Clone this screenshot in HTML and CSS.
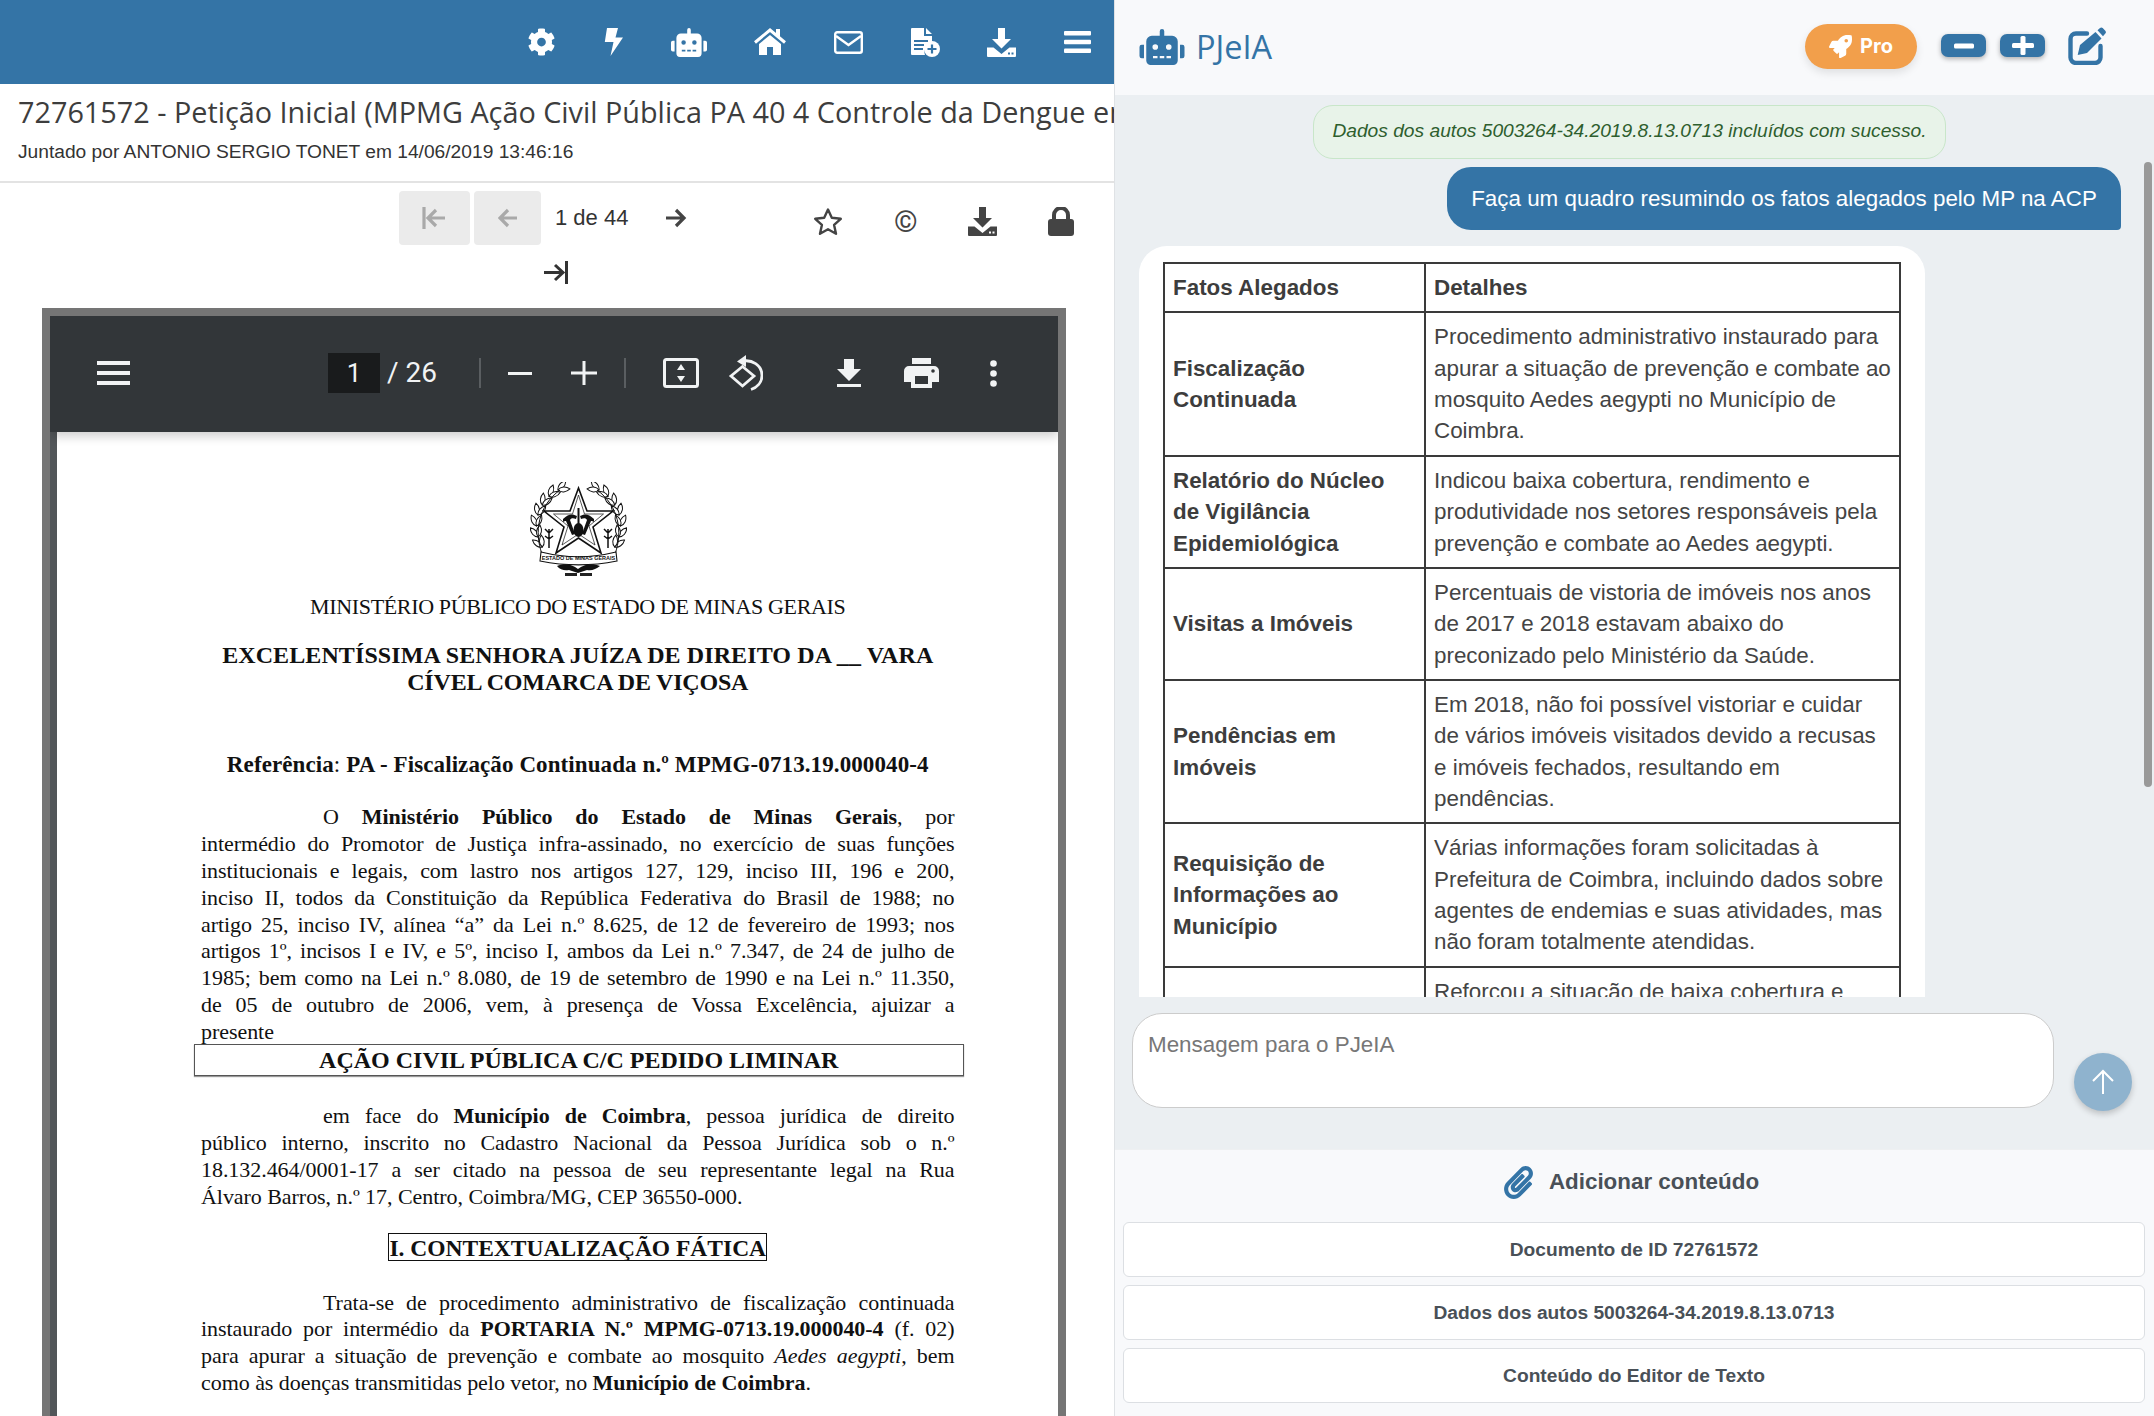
FILE: index.html
```html
<!DOCTYPE html>
<html lang="pt-BR">
<head>
<meta charset="utf-8">
<title>PJeIA</title>
<link rel="stylesheet" href="styles.css">
</head>
<body>
<svg class="defs" width="0" height="0" aria-hidden="true">
  <defs>
    <symbol id="i-robot" viewBox="0 0 640 512"><path d="M32,224H64V416H32A31.96166,31.96166,0,0,1,0,384V256A31.96166,31.96166,0,0,1,32,224Zm512-48V448a64.06328,64.06328,0,0,1-64,64H160a64.06328,64.06328,0,0,1-64-64V176a79.974,79.974,0,0,1,80-80H288V32a32,32,0,0,1,64,0V96H464A79.974,79.974,0,0,1,544,176ZM264,256a40,40,0,1,0-40,40A39.997,39.997,0,0,0,264,256Zm-8,128H192v32h64Zm96,0H288v32h64ZM456,256a40,40,0,1,0-40,40A39.997,39.997,0,0,0,456,256Zm-8,128H384v32h64ZM640,256V384a31.96166,31.96166,0,0,1-32,32H576V224h32A31.96166,31.96166,0,0,1,640,256Z"/></symbol>
    <symbol id="i-tray" viewBox="0 0 29 29"><path d="M11 0h7v11h6l-9.500 9.500L5 11h6z"/><path d="M0 19.500h6.500l8 6.500 8-6.500H29V28a1 1 0 0 1-1 1H1a1 1 0 0 1-1-1z"/><path fill="var(--tray-dot,#3474a6)" d="M21 24.500h2v2h-2zM24.500 24.500h2v2h-2z"/></symbol>
    <path id="lf" d="M0 0C3-3.200 8-3.200 12 0 8 3.200 3 3.200 0 0z" fill="#fff" stroke="#111" stroke-width="1"/>
  </defs>
</svg>
<div class="app">
  <section class="viewer">
    <nav class="topnav">
      <svg class="ic" width="29" height="28" viewBox="0 0 512 512"><path d="M487.4 315.7l-42.6-24.6c4.3-23.2 4.3-47 0-70.2l42.6-24.6c4.9-2.8 7.1-8.6 5.5-14-11.1-35.6-30-67.800-54.700-94.600-3.800-4.100-10-5.100-14.800-2.300L380.800 110c-17.900-15.400-38.500-27.300-60.800-35.100V25.800c0-5.600-3.900-10.500-9.400-11.700-36.700-8.200-74.300-7.800-109.200 0-5.500 1.200-9.400 6.100-9.400 11.700V75c-22.200 7.900-42.800 19.800-60.800 35.100L88.700 85.500c-4.900-2.800-11-1.900-14.800 2.300-24.700 26.700-43.600 58.900-54.700 94.600-1.700 5.400.6 11.200 5.500 14L67.300 221c-4.300 23.200-4.300 47 0 70.200l-42.600 24.600c-4.900 2.800-7.100 8.600-5.500 14 11.100 35.600 30 67.800 54.700 94.600 3.800 4.100 10 5.100 14.800 2.300l42.600-24.600c17.900 15.400 38.500 27.300 60.800 35.100v49.200c0 5.600 3.900 10.500 9.400 11.700 36.700 8.200 74.300 7.800 109.200 0 5.500-1.200 9.400-6.100 9.400-11.700v-49.200c22.200-7.900 42.800-19.800 60.800-35.100l42.600 24.600c4.900 2.800 11 1.900 14.800-2.300 24.700-26.700 43.600-58.900 54.700-94.600 1.500-5.500-.7-11.300-5.600-14.100zM256 336c-44.100 0-80-35.900-80-80s35.900-80 80-80 80 35.900 80 80-35.900 80-80 80z"/></svg>
      <svg class="ic" width="19" height="28" viewBox="0 0 19 28"><path d="M3 0h11l-2.500 9.500H19L6.500 28 9.500 14H.8z"/></svg>
      <svg class="ic" width="36" height="29"><use href="#i-robot"/></svg>
      <svg class="ic ic-home" width="32" height="27" viewBox="0 0 32 27"><path d="M1 14.500 16 2l15 12.500" fill="none" stroke="#fff" stroke-width="3"/><path d="M22 1h4v9l-4-3.500zM16 7 5 16v11h8v-8h6v8h8V16z"/></svg>
      <svg class="ic" width="29" height="23" viewBox="0 0 29 23"><rect x="1.200" y="1.200" width="26.600" height="20.600" rx="2" fill="none" stroke="#fff" stroke-width="2.400"/><path d="M2 5l12.500 9L27 5" fill="none" stroke="#fff" stroke-width="2.400"/></svg>
      <svg class="ic" width="29" height="29" viewBox="0 0 29 29"><path d="M1 0h12v8h8v8.500a7.500 7.500 0 0 0-7 10.500H1a1 1 0 0 1-1-1V1a1 1 0 0 1 1-1zm14 0 6 6h-6zM3 12v2h14v-2zm0 4v2h10v-2zm0 4v2h9v-2z" fill-rule="evenodd"/><circle cx="21" cy="21" r="8"/><path d="M21 16.500v9M16.500 21h9" stroke="#3474a6" stroke-width="2.200"/></svg>
      <svg class="ic" width="29" height="29"><use href="#i-tray"/></svg>
      <svg class="ic" width="27" height="22" viewBox="0 0 27 22"><rect width="27" height="4.500" rx="1"/><rect y="8.700" width="27" height="4.500" rx="1"/><rect y="17.500" width="27" height="4.500" rx="1"/></svg>
    </nav>
    <header class="doc-head">
      <h1 class="doc-title">72761572 - Petição Inicial (MPMG Ação Civil Pública PA 40 4 Controle da Dengue em Coimbra)</h1>
      <p class="doc-meta">Juntado por ANTONIO SERGIO TONET em 14/06/2019 13:46:16</p>
    </header>
    <div class="pager">
      <div class="pager-row">
        <button class="pg-btn pg-first" type="button"><svg width="26" height="24" viewBox="0 0 26 24"><path d="M2 1v22M23 12H7M14 4l-8 8 8 8" fill="none" stroke="#a9a9a9" stroke-width="3.200"/></svg></button>
        <button class="pg-btn pg-prev" type="button"><svg width="20" height="20" viewBox="0 0 20 20"><path d="M19 10H3M10 2l-8 8 8 8" fill="none" stroke="#a9a9a9" stroke-width="3.200"/></svg></button>
        <span class="pg-label">1 de 44</span>
        <svg class="pg-next" width="22" height="20" viewBox="0 0 22 20"><path d="M1 10h18M11 2l8 8-8 8" fill="none" stroke="#444" stroke-width="3.200"/></svg>
        <svg class="pg-star" width="30" height="29" viewBox="0 0 30 29"><path d="M15 2.500l3.800 8.300 9 1-6.700 6.100 1.900 8.900L15 22.300 7 26.800l1.900-8.900-6.700-6.100 9-1z" fill="none" stroke="#444" stroke-width="2.400" stroke-linejoin="round"/></svg>
        <span class="pg-copy">©</span>
        <svg class="pg-dl" width="29" height="29"><use href="#i-tray"/></svg>
        <svg class="pg-lock" width="26" height="29" viewBox="0 0 26 29"><path d="M6 13V8a7 7 0 0 1 14 0v5" fill="none" stroke="#444" stroke-width="4"/><rect y="12" width="26" height="17" rx="3" fill="#444"/></svg>
      </div>
      <div class="pager-last">
        <svg width="25" height="23" viewBox="0 0 25 23"><path d="M23.500 0v23M1 11.500h18M12 4l8 7.500-8 7.500" fill="none" stroke="#333" stroke-width="3"/></svg>
      </div>
    </div>
    <div class="pdf-frame">
      <div class="pdf-bar">
        <svg class="pb-menu" width="33" height="24" viewBox="0 0 33 24"><path d="M0 0h33v4H0zM0 10h33v4H0zM0 20h33v4H0z"/></svg>
        <span class="pb-page">1</span>
        <span class="pb-total">/ 26</span>
        <i class="pb-sep pb-sep-a"></i>
        <svg class="pb-minus" width="24" height="3" viewBox="0 0 24 3"><path d="M0 0h24v3H0z"/></svg>
        <svg class="pb-plus" width="26" height="24" viewBox="0 0 26 24"><path d="M11.500 0h3v10.500H26v3H14.500V24h-3V13.500H0v-3h11.500z"/></svg>
        <i class="pb-sep pb-sep-b"></i>
        <svg class="pb-fit" width="36" height="30" viewBox="0 0 36 30"><rect x="1.500" y="1.500" width="33" height="27" rx="2" fill="none" stroke="#f1f3f4" stroke-width="3"/><path d="M18 6l4 6h-8zM18 24l-4-6h8z"/></svg>
        <svg class="pb-rotate" width="35" height="36" viewBox="0 0 35 36"><path d="M14.500 11.500 3 21l11.500 10L26 21z" fill="none" stroke="#f1f3f4" stroke-width="2.800"/><path d="M13 6.500c11-3 21 4 21 14 0 7-5 12-11 14" fill="none" stroke="#f1f3f4" stroke-width="2.800"/><path d="M18 0v12L9 6.500z"/></svg>
        <svg class="pb-dl" width="24" height="28" viewBox="0 0 24 28"><path d="M7 0h10v10h7L12 22 0 10h7zM0 25h24v3H0z"/></svg>
        <svg class="pb-print" width="35" height="30" viewBox="0 0 35 30"><path d="M8 0h19v6H8zM5 8h25a5 5 0 0 1 5 5v11h-7v6H7v-6H0V13a5 5 0 0 1 5-5zm6 10v8h13v-8z" fill-rule="evenodd"/><circle cx="29" cy="13" r="1.800" fill="#323639"/></svg>
        <svg class="pb-dots" width="7" height="27" viewBox="0 0 7 27"><circle cx="3.500" cy="3.500" r="3.300"/><circle cx="3.500" cy="13.500" r="3.300"/><circle cx="3.500" cy="23.500" r="3.300"/></svg>
      </div>
      <article class="pdf-page">
        <svg class="seal" width="97" height="96" viewBox="0 0 97 96">
          <g id="wreath">
            <use href="#lf" transform="translate(12.300 65) rotate(-145)"/><use href="#lf" transform="translate(12.300 65) rotate(-95)"/>
            <use href="#lf" transform="translate(8 55) rotate(-130)"/><use href="#lf" transform="translate(8 55) rotate(-80)"/>
            <use href="#lf" transform="translate(6.500 44) rotate(-115)"/><use href="#lf" transform="translate(6.500 44) rotate(-65)"/>
            <use href="#lf" transform="translate(8 33) rotate(-100)"/><use href="#lf" transform="translate(8 33) rotate(-50)"/>
            <use href="#lf" transform="translate(12.300 23) rotate(-85)"/><use href="#lf" transform="translate(12.300 23) rotate(-35)"/>
            <use href="#lf" transform="translate(19 14.300) rotate(-70)"/><use href="#lf" transform="translate(19 14.300) rotate(-20)"/>
            <use href="#lf" transform="translate(28 8) rotate(-50)"/><use href="#lf" transform="translate(28 8) rotate(-5)"/>
            <path d="M12 72C4 50 8 24 30 8" fill="none" stroke="#111" stroke-width="1"/>
          </g>
          <use href="#wreath" transform="translate(97 0) scale(-1 1)"/>
          <path d="M48.500 6 57 29h26L63 45l8 26-22.500-15L26 71l8-26L14 29h26z" fill="#fff" stroke="#111" stroke-width="1.600"/>
          <path d="M48.500 13 54.500 32h19L59 44l6 19-16.500-11L32 63l6-19-14.500-12h19z" fill="#fff" stroke="#111" stroke-width=".7"/>
          <path d="M47.500 26h2v26h-2z" fill="#111"/>
          <path d="M33 37c6-6 10-5 14-3l-1 3c-3-1-5-1-6 1l5 14-3 1-6-14c-1 0-2 0-3 1zM64 37c-6-6-10-5-14-3l1 3c3-1 5-1 6 1l-5 14 3 1 6-14c1 0 2 0 3 1z" fill="#111"/>
          <ellipse cx="48.500" cy="48" rx="5" ry="7" fill="#111"/>
          <path d="M19 47v19M19 51l-4-4M19 51l4-4M19 57l-4-3M19 57l4-3M78 47v19M78 51l-4-4M78 51l4-4M78 57l-4-3M78 57l4-3" stroke="#111" stroke-width="1.500" fill="none"/>
          <path d="M11 70c24 6 51 6 75 0l1 9c-25 5-52 5-77 0z" fill="#fff" stroke="#111" stroke-width="1.100"/>
          <text class="seal-text" x="48.500" y="78" text-anchor="middle">ESTADO DE MINAS GERAIS</text>
          <path d="M27 84c7-3 15-2 21 3 6-5 14-6 22-3-4 3-8 5-13 4l-9 3-9-3c-4 1-9 0-12-4z" fill="#111"/>
          <path d="M35 91h12v3H35zM50 91h12v3H50z" fill="#222"/>
        </svg>
        <p class="pdf-org">MINISTÉRIO PÚBLICO DO ESTADO DE MINAS GERAIS</p>
        <h2 class="pdf-addr">EXCELENTÍSSIMA SENHORA JUÍZA DE DIREITO DA __ VARA<br><span class="pdf-addr-2">CÍVEL COMARCA DE VIÇOSA</span></h2>
        <p class="pdf-ref"><b>Referência</b>: <b>PA - Fiscalização Continuada n.º MPMG-0713.19.000040-4</b></p>
        <div class="pdf-par pdf-par-a">
          <span class="ln ln-in">O <b>Ministério Público do Estado de Minas Gerais</b>, por</span>
          <span class="ln">intermédio do Promotor de Justiça infra-assinado, no exercício de suas funções</span>
          <span class="ln">institucionais e legais, com lastro nos artigos 127, 129, inciso III, 196 e 200,</span>
          <span class="ln">inciso II, todos da Constituição da República Federativa do Brasil de 1988; no</span>
          <span class="ln">artigo 25, inciso IV, alínea “a” da Lei n.º 8.625, de 12 de fevereiro de 1993; nos</span>
          <span class="ln">artigos 1º, incisos I e IV, e 5º, inciso I, ambos da Lei n.º 7.347, de 24 de julho de</span>
          <span class="ln">1985; bem como na Lei n.º 8.080, de 19 de setembro de 1990 e na Lei n.º 11.350,</span>
          <span class="ln">de 05 de outubro de 2006, vem, à presença de Vossa Excelência, ajuizar a</span>
          <span class="ln ln-end">presente</span>
        </div>
        <p class="pdf-box-wide"><b>AÇÃO CIVIL PÚBLICA C/C PEDIDO LIMINAR</b></p>
        <div class="pdf-par pdf-par-b">
          <span class="ln ln-in">em face do <b>Município de Coimbra</b>, pessoa jurídica de direito</span>
          <span class="ln">público interno, inscrito no Cadastro Nacional da Pessoa Jurídica sob o n.º</span>
          <span class="ln">18.132.464/0001-17 a ser citado na pessoa de seu representante legal na Rua</span>
          <span class="ln ln-end">Álvaro Barros, n.º 17, Centro, Coimbra/MG, CEP 36550-000.</span>
        </div>
        <div class="pdf-center"><p class="pdf-box-tight"><b>I. CONTEXTUALIZAÇÃO FÁTICA</b></p></div>
        <div class="pdf-par pdf-par-c">
          <span class="ln ln-in">Trata-se de procedimento administrativo de fiscalização continuada</span>
          <span class="ln">instaurado por intermédio da <b>PORTARIA N.º MPMG-0713.19.000040-4</b> (f. 02)</span>
          <span class="ln">para apurar a situação de prevenção e combate ao mosquito <i>Aedes aegypti</i>, bem</span>
          <span class="ln ln-end">como às doenças transmitidas pelo vetor, no <b>Município de Coimbra</b>.</span>
        </div>
      </article>
    </div>
  </section>
  <aside class="assistant">
    <header class="as-head">
      <svg class="as-logo" width="46" height="36"><use href="#i-robot"/></svg>
      <span class="as-name">PJeIA</span>
      <button class="btn-pro" type="button"><svg width="23" height="23" viewBox="0 0 512 512"><path d="M505.05 19.1a15.89 15.89 0 0 0-12.2-12.2C460.65 0 435.46 0 410.36 0c-103.2 0-165.1 55.2-211.29 128H94.87A48 48 0 0 0 52 154.49l-49.42 98.8A24 24 0 0 0 24.07 288h103.77l-22.47 22.47a32 32 0 0 0 0 45.25l50.9 50.91a32 32 0 0 0 45.26 0L224 384.16V488a24 24 0 0 0 34.7 21.49l98.7-49.39a47.91 47.91 0 0 0 26.5-42.9V312.79c72.59-46.3 128-108.4 128-211.09.1-25.2.1-50.4-6.85-82.6zM384 168a40 40 0 1 1 40-40 40 40 0 0 1-40 40z"/></svg>Pro</button>
      <button class="btn-zoom btn-minus" type="button"><svg width="20" height="6" viewBox="0 0 20 6"><rect width="20" height="5" y=".5" rx="1.500"/></svg></button>
      <button class="btn-zoom btn-plus" type="button"><svg width="22" height="19" viewBox="0 0 22 19"><rect y="7" width="22" height="5" rx="1.500"/><rect x="8.500" width="5" height="19" rx="1.500"/></svg></button>
      <svg class="as-edit" width="38" height="38" viewBox="0 0 38 38"><path d="M19 6.500H8a5.500 5.500 0 0 0-5.500 5.500v18.500A5.500 5.500 0 0 0 8 36h19a5.500 5.500 0 0 0 5.500-5.500V19" fill="none" stroke="#3474a6" stroke-width="4.400" stroke-linecap="round"/><path d="M9.700 28l2.300-10L27.500 5l6 6.500L19 26z"/><path d="M29.500 3.200 32 1a2 2 0 0 1 2.700 0l2.600 2.800a2 2 0 0 1 0 2.700l-2.300 2.700z"/></svg>
    </header>
    <div class="chat">
      <div class="chat-scroll">
        <p class="chat-ok">Dados dos autos 5003264-34.2019.8.13.0713 incluídos com sucesso.</p>
        <p class="chat-user">Faça um quadro resumindo os fatos alegados pelo MP na ACP</p>
        <div class="chat-card">
          <table class="facts">
            <thead><tr><th>Fatos Alegados</th><th>Detalhes</th></tr></thead>
            <tbody>
              <tr><th>Fiscalização Continuada</th><td>Procedimento administrativo instaurado para apurar a situação de prevenção e combate ao mosquito Aedes aegypti no Município de Coimbra.</td></tr>
              <tr><th>Relatório do Núcleo de Vigilância Epidemiológica</th><td>Indicou baixa cobertura, rendimento e produtividade nos setores responsáveis pela prevenção e combate ao Aedes aegypti.</td></tr>
              <tr><th>Visitas a Imóveis</th><td>Percentuais de vistoria de imóveis nos anos de 2017 e 2018 estavam abaixo do preconizado pelo Ministério da Saúde.</td></tr>
              <tr><th>Pendências em Imóveis</th><td>Em 2018, não foi possível vistoriar e cuidar de vários imóveis visitados devido a recusas e imóveis fechados, resultando em pendências.</td></tr>
              <tr><th>Requisição de Informações ao Município</th><td>Várias informações foram solicitadas à Prefeitura de Coimbra, incluindo dados sobre agentes de endemias e suas atividades, mas não foram totalmente atendidas.</td></tr>
              <tr><th></th><td>Reforçou a situação de baixa cobertura e</td></tr>
            </tbody>
          </table>
        </div>
      </div>
      <i class="chat-thumb"></i>
      <div class="composer">
        <div class="composer-input">Mensagem para o PJeIA</div>
        <button class="composer-send" type="button"><svg width="24" height="26" viewBox="0 0 24 26"><path d="M12 25V2M2 12 12 2l10 10" fill="none" stroke="#fff" stroke-width="2"/></svg></button>
      </div>
    </div>
    <div class="add">
      <h3 class="add-title"><svg width="29" height="33" viewBox="0 0 448 512"><path d="M43.246 466.142c-58.43-60.289-57.341-157.511 1.386-217.581L254.392 34c44.316-45.332 116.351-45.336 160.671 0 43.89 44.894 43.943 117.329 0 162.276L232.214 383.128c-29.855 30.537-78.633 30.111-107.982-.998-28.275-29.97-27.368-77.473 1.452-106.953l143.743-146.835c6.182-6.314 16.312-6.422 22.626-.241l22.861 22.379c6.315 6.182 6.422 16.312.241 22.626L171.427 319.927c-4.932 5.045-5.236 13.428-.648 18.292 4.372 4.634 11.245 4.711 15.688.165l182.849-186.851c19.613-20.062 19.613-52.725-.011-72.798-19.189-19.627-49.957-19.637-69.154 0L90.39 293.295c-34.763 35.56-35.299 93.12-1.191 128.313 34.01 35.093 88.985 35.137 123.058.286l172.06-175.999c6.177-6.319 16.307-6.433 22.626-.256l22.877 22.364c6.319 6.177 6.434 16.307.256 22.626l-172.06 175.998c-59.576 60.938-155.943 60.216-214.77-.485z"/></svg>Adicionar conteúdo</h3>
      <button class="add-btn" type="button">Documento de ID 72761572</button>
      <button class="add-btn" type="button">Dados dos autos 5003264-34.2019.8.13.0713</button>
      <button class="add-btn" type="button">Conteúdo do Editor de Texto</button>
    </div>
  </aside>
</div>
</body>
</html>
```
FILE: styles.css
```css
* { box-sizing: border-box; }
html, body { margin: 0; height: 1416px; overflow: hidden; background: #fff; }
body { font-family: "Liberation Sans", Arial, sans-serif; color: #333; }
.defs { position: absolute; }
p, h1, h2, h3 { margin: 0; }
button { font-family: inherit; cursor: pointer; }
svg { display: block; flex: none; }
.app { display: grid; grid-template-columns: 1115px 1fr; height: 1416px; }

/* left: document viewer */
.viewer { overflow: hidden; height: 1416px; border-right: 1px solid #dfe2e5; }
.topnav { height: 84px; background: #3474a6; display: flex; justify-content: flex-end; align-items: center; gap: 47.700px; padding-right: 23px; }
.ic { fill: #fff; --tray-dot: #3474a6; }
.ic-home { margin-top: -1px; }
.doc-head { height: 99px; padding: 0 0 0 18px; border-bottom: 2px solid #e3e3e3; overflow: hidden; }
.doc-title { font: 400 28.800px/44px "Open Sans", sans-serif; color: #3d3d3d; white-space: nowrap; margin-top: 6px; }
.doc-meta { font-size: 19.200px; line-height: 24px; color: #333; margin-top: 6px; }
.pager { height: 117px; padding-left: 399px; }
.pager-row { display: flex; align-items: center; height: 54px; margin-top: 8px; }
.pg-btn { height: 54px; background: #ebebeb; border: 0; border-radius: 4px; display: flex; align-items: center; justify-content: center; padding: 0; }
.pg-first { width: 71px; }
.pg-prev { width: 67px; margin-left: 4px; }
.pg-label { font-size: 22px; color: #333; margin-left: 14px; width: 74px; white-space: nowrap; }
.pg-next { margin-left: 36px; }
.pg-star { margin-left: 126px; margin-top: 7px; }
.pg-copy { font: 400 30px/30px "Roboto", sans-serif; color: #444; width: 24px; margin-left: 51px; margin-top: 8px; }
.pg-dl { margin-left: 50px; margin-top: 7px; fill: #444; --tray-dot: #fff; }
.pg-lock { margin-left: 51px; margin-top: 7px; }
.pager-last { margin: 16px 0 0 144px; }

.pdf-frame { width: 1024px; margin-left: 42px; border: 8px solid #757575; border-bottom: 0; background: #525659; height: 1108px; overflow: hidden; }
.pdf-bar { height: 116px; padding-bottom: 2px; background: #323639; display: flex; align-items: center; fill: #f1f3f4; color: #f1f3f4; position: relative; z-index: 1; box-shadow: 0 4px 10px rgba(0,0,0,.2); }
.pb-menu { margin-left: 47px; }
.pb-page { width: 52px; height: 40px; margin-left: 198px; background: #191b1c; font: 400 26px/40px "Roboto", sans-serif; text-align: center; }
.pb-total { font: 400 28px/40px "Roboto", sans-serif; margin-left: 7px; width: 49px; white-space: nowrap; }
.pb-sep { display: block; width: 2px; height: 30px; background: #5a5e61; }
.pb-sep-a { margin-left: 43px; }
.pb-sep-b { margin-left: 27px; }
.pb-minus { margin-left: 27px; }
.pb-plus { margin-left: 39px; }
.pb-fit { margin-left: 37px; }
.pb-rotate { margin-left: 29px; }
.pb-dl { margin-left: 74px; }
.pb-print { margin-left: 43px; }
.pb-dots { margin-left: 51px; }

.pdf-page { margin-left: 7px; height: 992px; background: #fff; padding: 50px 103.500px 0 144px; color: #111; font-family: "Liberation Serif", "Times New Roman", serif; font-size: 22px; line-height: 27px; position: relative; }
.seal { margin: 0 0 0 329px; }
.seal-text { font: 700 5.500px "Liberation Sans", sans-serif; fill: #111; }
.pdf-org { text-align: center; margin: 15px 0 0; white-space: nowrap; font-size: 22px; letter-spacing: -.35px; }
.pdf-addr { font-size: 24px; line-height: 27px; font-weight: 700; text-align: center; margin: 22px 0 0; white-space: nowrap; letter-spacing: .1px; }
.pdf-addr-2 { letter-spacing: -.2px; }
.pdf-ref { text-align: center; margin-top: 55px; white-space: nowrap; font-size: 23px; letter-spacing: .1px; }
.pdf-par { letter-spacing: -.05px; }
.pdf-par-a { margin-top: 26px; }
.pdf-par-b { margin-top: 27px; }
.pdf-par-c { margin-top: 29px; }
.ln { display: block; text-align: justify; text-align-last: justify; height: 26.900px; line-height: 26.900px; }
.ln-in { padding-left: 122px; }
.ln-end { text-align-last: left; }
.pdf-box-wide { margin: -2px -9px 0 -7px; height: 32px; border: 1px solid #555; text-align: center; line-height: 31px; font-size: 24px; box-shadow: 0 1px 1px #999; }
.pdf-center { display: flex; justify-content: center; margin-top: 22px; }
.pdf-box-tight { border: 1px solid #111; height: 28px; line-height: 28px; white-space: nowrap; font-size: 23.500px; padding: 0; }

/* right: assistant */
.assistant { display: flex; flex-direction: column; height: 1416px; background: #f8f9fb; position: relative; }
.as-head { height: 95px; flex: none; display: flex; align-items: center; padding-left: 24px; }
.as-logo { fill: #3474a6; margin-top: -2px; }
.as-name { font: 400 32.500px/44px "Open Sans", sans-serif; color: #3474a6; margin-left: 11px; width: 609px; margin-top: -2px; }
.btn-pro { width: 112px; height: 45px; border: 0; border-radius: 23px; background: #f29f4b; color: #fff; fill: #fff; font: 700 20px "Inter", sans-serif; display: flex; align-items: center; justify-content: center; gap: 8px; box-shadow: 0 4px 8px rgba(0,0,0,.1); margin-top: -3px; }
.btn-zoom { width: 45px; height: 23px; border: 0; border-radius: 7px; background: #3474a6; fill: #fff; display: flex; align-items: center; justify-content: center; box-shadow: 0 2px 5px rgba(0,0,0,.3); padding: 0; margin-top: -4px; }
.btn-minus { margin-left: 24px; }
.btn-plus { margin-left: 14px; }
.as-edit { fill: #3474a6; margin-left: 23px; margin-top: -4px; }

.chat { flex: none; height: 1054px; background: #ebeff2; position: relative; }
.chat-scroll { height: 902px; overflow: hidden; padding-top: 10px; display: flex; flex-direction: column; }
.chat-ok { align-self: flex-start; flex: none; margin-left: 198px; width: 633px; height: 54px; background: #e8f3e9; border: 1px solid #c8e6c9; border-radius: 20px; font-style: italic; font-size: 19.200px; line-height: 50px; color: #2e5e2e; text-align: center; white-space: nowrap; }
.chat-user { align-self: flex-start; flex: none; margin: 8px 0 0 332px; width: 674px; height: 63px; background: #3474a6; color: #fff; border-radius: 24px 24px 4px 24px; font-size: 22.400px; line-height: 63px; text-align: center; white-space: nowrap; }
.chat-card { margin: 16px 0 0 24px; width: 786px; background: #fff; border-radius: 28px 28px 0 0; padding: 16px 24px 0; flex: none; }
.facts { width: 738px; border-collapse: collapse; table-layout: fixed; font-size: 22.400px; line-height: 31.360px; color: #444; }
.facts th, .facts td { border: 2px solid #3a3a3a; padding: 8px 8px; text-align: left; vertical-align: middle; }
.facts th { font-weight: 700; color: #3d3d3d; width: 261px; }
.facts thead th:last-child { width: auto; }
.chat-thumb { position: absolute; right: 2px; top: 67px; width: 8px; height: 625px; background: #999; border-radius: 4px; }
.composer { height: 152px; padding: 16px 0 0 17px; display: flex; align-items: flex-start; }
.composer-input { width: 922px; height: 95px; background: #fff; border: 1.500px solid #ccc; border-radius: 30px; padding: 18px 15px; font-size: 22.400px; line-height: 26px; color: #777; }
.composer-send { width: 58px; height: 58px; border-radius: 50%; border: 0; background: #8fb3ce; margin: 40px 0 0 20px; display: flex; align-items: center; justify-content: center; box-shadow: 0 3px 6px rgba(0,0,0,.2); padding: 0; }

.add { flex: 1; padding: 0 8px 0 8px; border-top: 1px solid #eef0f2; }
.add-title { display: flex; align-items: center; justify-content: center; height: 64px; margin: 0 6px 8px 0; gap: 16px; font-size: 22.400px; font-weight: 700; color: #495057; fill: #3474a6; }
.add-btn { display: block; width: 1022px; height: 55px; margin-bottom: 8px; background: #fff; border: 1.500px solid #dcdfe3; border-radius: 6px; font-size: 19.200px; font-weight: 700; color: #495057; }
```
